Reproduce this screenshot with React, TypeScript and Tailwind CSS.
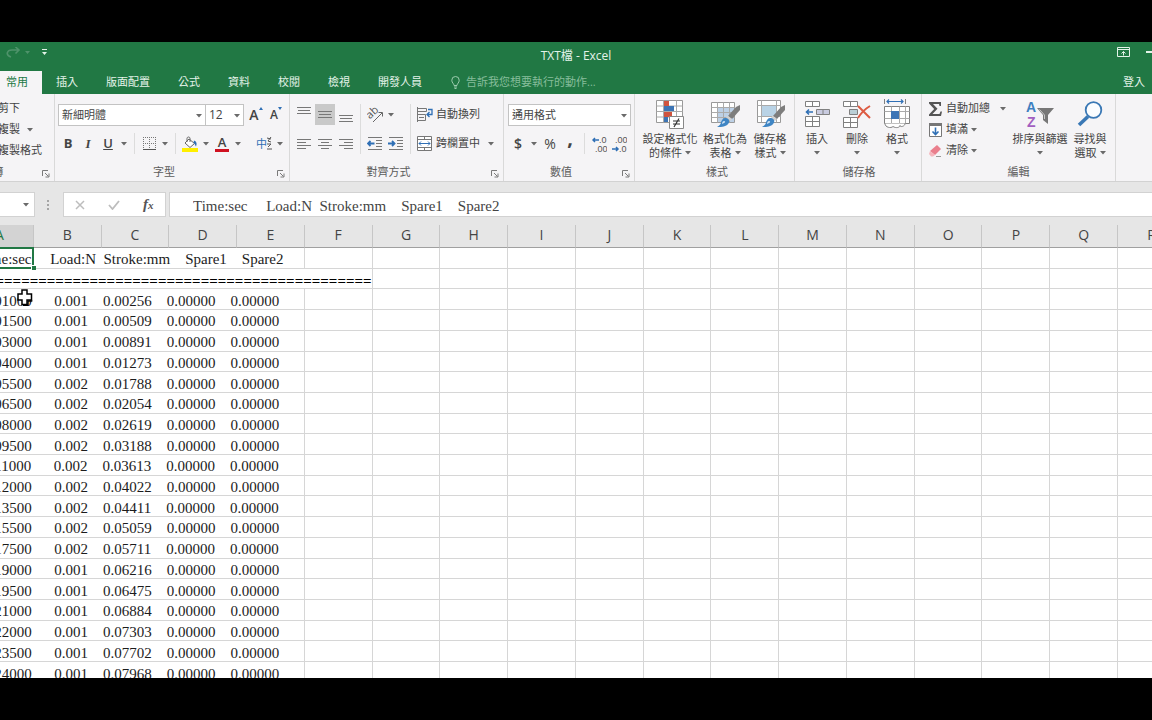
import clsx from 'clsx';
import React from 'react';

const columns = 'ABCDEFGHIJKLMNOPQR'.split('');

const tabs = ['常用', '插入', '版面配置', '公式', '資料', '校閱', '檢視', '開發人員'];

const headerText = 'Time:sec     Load:N  Stroke:mm    Spare1    Spare2';

const samples: [string, string, string][] = [
  ['0.01000', '0.001', '0.00256'],
  ['0.01500', '0.001', '0.00509'],
  ['0.03000', '0.001', '0.00891'],
  ['0.04000', '0.001', '0.01273'],
  ['0.05500', '0.002', '0.01788'],
  ['0.06500', '0.002', '0.02054'],
  ['0.08000', '0.002', '0.02619'],
  ['0.09500', '0.002', '0.03188'],
  ['0.11000', '0.002', '0.03613'],
  ['0.12000', '0.002', '0.04022'],
  ['0.13500', '0.002', '0.04411'],
  ['0.15500', '0.002', '0.05059'],
  ['0.17500', '0.002', '0.05711'],
  ['0.19000', '0.001', '0.06216'],
  ['0.19500', '0.001', '0.06475'],
  ['0.21000', '0.001', '0.06884'],
  ['0.22000', '0.001', '0.07303'],
  ['0.23500', '0.001', '0.07702'],
  ['0.24000', '0.001', '0.07968'],
];

function Caret({ className }: { className?: string }) {
  return (
    <svg
      width="6"
      height="4"
      viewBox="0 0 6 4"
      className={clsx('shrink-0 fill-[#6a6a6a]', className)}
    >
      <path d="M0 0h6L3 3.500z" />
    </svg>
  );
}

function CaretButton({ label }: { label: string }) {
  return (
    <button aria-label={label} className="flex h-[21px] w-3 items-center justify-center">
      <Caret />
    </button>
  );
}

interface ToolProps {
  label: string;
  active?: boolean;
  className?: string;
  children: React.ReactNode;
}

function Tool({ label, active, className, children }: ToolProps) {
  return (
    <button
      aria-label={label}
      className={clsx(
        'flex h-[21px] w-5 shrink-0 items-center justify-center',
        active && 'bg-[#c9c9c9]',
        className,
      )}
    >
      {children}
    </button>
  );
}

function Divider() {
  return <span className="mx-1 w-px self-stretch bg-[#dcdcdc]" />;
}

interface GroupProps {
  title: string;
  launcher?: boolean;
  className: string;
  children: React.ReactNode;
}

function Group({ title, launcher, className, children }: GroupProps) {
  return (
    <section
      className={clsx('flex shrink-0 flex-col border-r border-[#d9d9d9]', className)}
    >
      <div className="flex h-[70px] items-start">{children}</div>
      <div className="flex h-4 items-center pt-px text-[#5c5c5c]">
        <span className="flex-1 text-center">{title}</span>
        {launcher && (
          <button aria-label={`${title}設定`} className="w-4 pt-[2px] pl-1">
            <svg width="8" height="8" viewBox="0 0 8 8" fill="none" stroke="#7a7a7a">
              <path d="M.5 6V.5H6M3 3l3.500 3.500M7 3.500V7H3.500" />
            </svg>
          </button>
        )}
      </div>
    </section>
  );
}

interface BigButtonProps {
  icon: React.ReactNode;
  lines: string[];
  className: string;
}

function BigButton({ icon, lines, className }: BigButtonProps) {
  return (
    <button
      className={clsx('mt-1 flex shrink-0 flex-col items-center leading-[14px]', className)}
    >
      <span className="mb-[2px] flex h-8 items-center">{icon}</span>
      <span className="whitespace-nowrap">{lines[0]}</span>
      <span className="flex h-[14px] items-center gap-[3px] whitespace-nowrap">
        {lines[1]}
        <Caret />
      </span>
    </button>
  );
}

function SelectBox({
  label,
  value,
  className,
}: {
  label: string;
  value: string;
  className: string;
}) {
  return (
    <label className={clsx('relative block h-[22px]', className)}>
      <select
        aria-label={label}
        defaultValue={value}
        className="h-full w-full appearance-none border border-[#c3c3c3] bg-white pl-[3px] text-[#444]"
      >
        <option>{value}</option>
      </select>
      <Caret className="pointer-events-none absolute top-[10px] right-1" />
    </label>
  );
}

// Horizontal rules of differing lengths, used by all alignment buttons
function Lines({ rows }: { rows: [number, number, number][] }) {
  return (
    <svg width="14" height="15" viewBox="0 0 14 15" stroke="#777">
      {rows.map(([y, x1, x2]) => (
        <path key={y} d={`M${x1} ${y}.5H${x2}`} />
      ))}
    </svg>
  );
}

function IndentIcon({ right }: { right?: boolean }) {
  return (
    <svg width="16" height="13" viewBox="0 0 16 13" fill="none">
      <path d="M1 .5h14M9 3.500h6M9 6.500h6M9 9.500h6M1 12.500h14" stroke="#777" />
      <path
        d={right ? 'M0 6.500h6M4 4l2.500 2.500L4 9' : 'M1 6.500h6.500M3.500 4L1 6.500 3.500 9'}
        stroke="#2f6fb5"
        strokeWidth="1.800"
      />
    </svg>
  );
}

function DecimalIcon({ less }: { less?: boolean }) {
  return (
    <svg
      width="15"
      height="18"
      viewBox="0 0 15 18"
      className="fill-[#555] font-['Liberation_Sans',sans-serif] text-[9px]"
    >
      <text x={less ? 3 : 7} y="8">
        {less ? '.00' : '.0'}
      </text>
      <text x={less ? 7 : 3} y="17">
        {less ? '.0' : '.00'}
      </text>
      <path
        d={less ? 'M0 14h6M4 12l2 2-2 2' : 'M1 5h6M3 3L1 5l2 2'}
        fill="none"
        stroke="#2f6fb5"
        strokeWidth="1.500"
      />
    </svg>
  );
}

function Brush() {
  return (
    <>
      <path d="M30 6v5l-8 9-4-3 8-9z" fill="#7d7d7d" />
      <path d="M17.500 16.500l4.500 3.500-2 2-4-3z" fill="#d0d0d0" />
      <path d="M15 19c3 0 5 2 4 4.500-2 4-7 5-12 4.500 3-2 4-3 4-5 1-2 2-4 4-4z" fill="#3f85c4" />
      <path d="M14 22c1.500 0 1.500 1.500 0 2l-2 1c0-2 1-3 2-3z" fill="#cfe2f3" />
    </>
  );
}

function ConditionalIcon() {
  return (
    <svg width="28" height="30" viewBox="0 0 28 30" fill="none">
      <path d="M.5 1.500h26v22H.5z" fill="#fff" stroke="#999" />
      <path d="M7.500 1.500v22M20.500 1.500v22M.5 7h26M.5 12.500h26M.5 18h26" stroke="#aaa" />
      <path d="M8 2h5v5H8zM8 13h8v5H8z" fill="#d0543f" />
      <path d="M8 7h10v5H8z" fill="#3d75b5" />
      <path d="M8 18h4v5H8z" fill="#3d75b5" />
      <path d="M13.500 17.500h14v12h-14z" fill="#fff" stroke="#888" />
      <path d="M17 22h7M17 25h7M23 19.500L18 28" stroke="#333" strokeWidth="1.200" />
    </svg>
  );
}

function TableStyleIcon() {
  return (
    <svg width="30" height="30" viewBox="0 0 30 30" fill="none">
      <path d="M1.500 3.500h23v20h-23z" fill="#fff" stroke="#999" />
      <path d="M7 9h17v14H7z" fill="#bcd0e6" />
      <path d="M7.500 3.500v20M13.500 3.500v20M19.500 3.500v20M1.500 8.500h23M1.500 13.500h23M1.500 18.500h23" stroke="#aaa" />
      <Brush />
    </svg>
  );
}

function CellStyleIcon() {
  return (
    <svg width="30" height="30" viewBox="0 0 30 30" fill="none">
      <path d="M2.500 1.500h23v22h-23z" fill="#fff" stroke="#999" />
      <path d="M7 7h14v10H7z" fill="#b9d3e6" />
      <path d="M6.500 1.500v22M21.500 1.500v22M2.500 6.500h23M2.500 17.500h23" stroke="#aaa" />
      <Brush />
    </svg>
  );
}

function InsertIcon() {
  return (
    <svg width="28" height="28" viewBox="0 0 28 28" fill="none" stroke="#808080">
      <path d="M2.500 1.500h14v5h-14zM9.500 1.500v5M2.500 16.500h14v10h-14zM9.500 16.500v10M2.500 21.500h14" fill="#fff" />
      <path d="M13.500 9.500h13v5h-13zM20 9.500v5" fill="#c9cbe0" />
      <path d="M3.500 12H10M6 9.500L3.500 12 6 14.500" stroke="#2f6fb5" strokeWidth="1.600" />
    </svg>
  );
}

function DeleteIcon() {
  return (
    <svg width="28" height="28" viewBox="0 0 28 28" fill="none" stroke="#808080">
      <path d="M.5 1.500h14v5H.5zM7.500 1.500v5M.5 17.500h14v10H.5zM7.500 17.500v10M.5 22.500h14" fill="#fff" />
      <path d="M6.500 9.500h8v5h-8z" fill="#b9cfd6" />
      <path d="M15 6l12 12M27 6C22 9 18 13 15 18" stroke="#dd5b42" strokeWidth="2" />
    </svg>
  );
}

function FormatIcon() {
  return (
    <svg width="28" height="30" viewBox="0 0 28 30" fill="none" stroke="#808080">
      <path d="M1.500 7.500h25v17h-25z" fill="#fff" />
      <path d="M8.500 7.500v17M16.500 7.500v17M22.500 7.500v17M1.500 12.500h25M1.500 19.500h25" stroke="#aaa" />
      <path d="M8 12h8v8H8z" fill="#3d75b5" stroke="none" />
      <path d="M2 24.500c0 4 6 5 8 3 3 2 7 1 7-1 0 2 5 1 5-2" fill="#fff" />
      <path d="M1.500 0v5M22.500 0v5" />
      <path d="M4 2.500h16M6 .5L4 2.500l2 2M18 .5l2 2-2 2" stroke="#2f6fb5" strokeWidth="1.200" />
    </svg>
  );
}

function SortIcon() {
  return (
    <svg
      width="28"
      height="30"
      viewBox="0 0 28 30"
      className="font-['Liberation_Sans',sans-serif] text-[14px] font-bold"
    >
      <text x="0" y="13" fill="#3d7fc1">
        A
      </text>
      <text x="1" y="28" fill="#a25fc0">
        Z
      </text>
      <path d="M11 9h17l-6 7v9l-5-4v-5z" fill="#777" />
      <path d="M13.500 10.500l5 5.500v4" stroke="#c8c8c8" fill="none" />
    </svg>
  );
}

function FindIcon() {
  return (
    <svg width="26" height="26" viewBox="0 0 26 26" fill="none" stroke="#3a78b5">
      <circle cx="16.500" cy="9" r="7.800" fill="#fbfdff" strokeWidth="1.800" />
      <path d="M11 15.500L2 24" strokeWidth="3.600" />
    </svg>
  );
}

function Ribbon() {
  return (
    <div className="flex h-[88px] shrink-0 overflow-hidden border-b border-[#d2d2d2] bg-[#f5f4f6] text-[11px] text-[#444]">
      <Group title="剪貼簿" launcher className="-ml-16 w-[119px]">
        <div className="flex flex-col items-start pt-1 pl-[62px] whitespace-nowrap">
          <button className="h-[21px]">剪下</button>
          <div className="flex gap-1">
            <button className="h-[21px]">複製</button>
            <CaretButton label="複製選項" />
          </div>
          <button className="h-[21px]">複製格式</button>
        </div>
      </Group>

      <Group title="字型" launcher className="w-[235px]">
        <div className="flex flex-col gap-[7px] pt-[10px] pl-[3px]">
          <div className="flex">
            <SelectBox label="字型" value="新細明體" className="w-[148px]" />
            <SelectBox label="字型大小" value="12" className="-ml-px w-[39px] text-xs" />
            <Tool label="放大字型" className="ml-[2px] font-['Open_Sans',sans-serif] text-sm font-semibold">
              A
              <svg width="4" height="3" viewBox="0 0 4 3" className="mb-3 fill-[#2f6fb5]">
                <path d="M0 3h4L2 0z" />
              </svg>
            </Tool>
            <Tool label="縮小字型" className="font-['Open_Sans',sans-serif] text-xs font-semibold">
              A
              <svg width="4" height="3" viewBox="0 0 4 3" className="mb-3 fill-[#2f6fb5]">
                <path d="M0 0h4L2 3z" />
              </svg>
            </Tool>
          </div>
          <div className="flex h-[21px] items-center font-['Open_Sans',sans-serif] text-[13px]">
            <Tool label="粗體" className="font-bold">B</Tool>
            <Tool label="斜體" className="font-['Liberation_Serif',serif] font-bold italic">I</Tool>
            <Tool label="底線" className="font-semibold underline">U</Tool>
            <CaretButton label="底線選項" />
            <Divider />
            <Tool label="框線">
              <svg width="13" height="13" viewBox="0 0 13 13" stroke="#777">
                <path d="M0 .5h13M0 6.500h13M.5 0v12M6.500 0v12M12.500 0v12" strokeDasharray="1 1" />
                <path d="M0 12.500h13" stroke="#555" />
              </svg>
            </Tool>
            <CaretButton label="框線選項" />
            <Divider />
            <Tool label="填滿色彩">
              <svg width="16" height="16" viewBox="0 0 16 16" fill="none" stroke="#666">
                <path d="M7 3l5.500 4.500L8 11.500 3 7z" fill="#fff" />
                <path d="M5 6V2.500C5 .5 8 .5 8 2.500V6" />
                <path d="M12 4.500c3 1 3 3.500 2 6-1-1-1-3-2.500-3.500z" fill="#2f6fb5" stroke="none" />
                <path d="M0 12h16v4H0z" fill="#ffef00" stroke="none" />
              </svg>
            </Tool>
            <CaretButton label="填滿色彩選項" />
            <Tool label="字型色彩">
              <span className="border-b-[3px] border-[#d01020] px-[3px] leading-[13px] font-semibold">
                A
              </span>
            </Tool>
            <CaretButton label="字型色彩選項" />
            <Tool label="注音標示" className="ml-[10px] font-['Noto_Sans_CJK_TC',sans-serif] text-[11px] text-[#2f6fb5]">
              中
              <svg width="5" height="13" viewBox="0 0 5 13" fill="none" stroke="#555">
                <path d="M0 1l4 1M4 0L1 4l3 1M0 7h4L1 10M0 12h5" />
              </svg>
            </Tool>
            <CaretButton label="注音標示選項" />
          </div>
        </div>
      </Group>

      <Group title="對齊方式" launcher className="w-[214px]">
        <div className="flex pt-[10px] pl-1">
          <div className="grid grid-cols-3 gap-x-px gap-y-2">
            <Tool label="靠上對齊"><Lines rows={[[0, 0, 14], [3, 1, 13], [6, 0, 14]]} /></Tool>
            <Tool label="置中對齊" active><Lines rows={[[4, 0, 14], [7, 1, 13], [10, 0, 14]]} /></Tool>
            <Tool label="靠下對齊"><Lines rows={[[8, 0, 14], [11, 1, 13], [14, 0, 14]]} /></Tool>
            <Tool label="靠左對齊"><Lines rows={[[3, 0, 14], [6, 0, 9], [9, 0, 14], [12, 0, 9]]} /></Tool>
            <Tool label="置中"><Lines rows={[[3, 0, 14], [6, 3, 11], [9, 0, 14], [12, 3, 11]]} /></Tool>
            <Tool label="靠右對齊"><Lines rows={[[3, 0, 14], [6, 5, 14], [9, 0, 14], [12, 5, 14]]} /></Tool>
          </div>
          <Divider />
          <div className="flex flex-col gap-2">
            <div className="flex">
              <Tool label="方向">
                <svg width="17" height="16" viewBox="0 0 17 16" fill="none" stroke="#666">
                  <text
                    x="1"
                    y="10"
                    fill="#555"
                    stroke="none"
                    transform="rotate(-42 5 9)"
                    className="font-['Open_Sans',sans-serif] text-[11px]"
                  >
                    ab
                  </text>
                  <path d="M6 15l9-9M11.500 5.500H15.500V9.500" />
                </svg>
              </Tool>
              <CaretButton label="方向選項" />
            </div>
            <div className="flex gap-px">
              <Tool label="減少縮排"><IndentIcon /></Tool>
              <Tool label="增加縮排"><IndentIcon right /></Tool>
            </div>
          </div>
          <Divider />
          <div className="flex flex-col gap-2 pl-[2px] whitespace-nowrap">
            <button className="flex h-[21px] items-center gap-[3px]">
              <svg width="16" height="15" viewBox="0 0 16 15" fill="none" stroke="#777">
                <path d="M.5 0v15M.5 1.500h9v3h-9M.5 7.500h8v6h-8M2 10.500h5" />
                <path d="M11 2.500h4v5h-5M12.500 5L10 7.500l2.500 2.500" stroke="#2f6fb5" strokeWidth="1.300" />
              </svg>
              自動換列
            </button>
            <div className="flex gap-[5px]">
              <button className="flex h-[21px] items-center gap-[3px]">
                <svg width="16" height="15" viewBox="0 0 16 15" fill="none" stroke="#777">
                  <path d="M.5.5h14v14H.5zM.5 3.500h14M.5 11.500h14M7.500 0v3.500M7.500 11.500V15" fill="#fff" />
                  <path d="M2 7.500h11M4 5.500l-2 2 2 2M11 5.500l2 2-2 2" stroke="#2f6fb5" />
                </svg>
                跨欄置中
              </button>
              <CaretButton label="跨欄置中選項" />
            </div>
          </div>
        </div>
      </Group>

      <Group title="數值" launcher className="w-[131px]">
        <div className="flex flex-col gap-[7px] pt-[10px] pl-1">
          <SelectBox label="數值格式" value="通用格式" className="w-[123px]" />
          <div className="flex h-[21px] items-center font-['Open_Sans',sans-serif] text-sm">
            <Tool label="會計數字格式" className="font-semibold">$</Tool>
            <CaretButton label="會計數字格式選項" />
            <Tool label="百分比樣式">%</Tool>
            <Tool label="千分位樣式" className="pb-3 text-xl font-bold">,</Tool>
            <Divider />
            <Tool label="增加小數位數"><DecimalIcon /></Tool>
            <Tool label="減少小數位數"><DecimalIcon less /></Tool>
          </div>
        </div>
      </Group>

      <Group title="樣式" className="w-40 pl-[5px]">
        <BigButton icon={<ConditionalIcon />} lines={['設定格式化', '的條件']} className="w-[60px]" />
        <BigButton icon={<TableStyleIcon />} lines={['格式化為', '表格']} className="w-[50px]" />
        <BigButton icon={<CellStyleIcon />} lines={['儲存格', '樣式']} className="w-10" />
      </Group>

      <Group title="儲存格" className="w-[127px] pl-[2px]">
        <BigButton icon={<InsertIcon />} lines={['插入']} className="w-10" />
        <BigButton icon={<DeleteIcon />} lines={['刪除']} className="w-10" />
        <BigButton icon={<FormatIcon />} lines={['格式']} className="w-10" />
      </Group>

      <Group title="編輯" className="w-[194px]">
        <div className="flex w-[88px] flex-col pt-1 pl-[6px] whitespace-nowrap">
          <div className="flex gap-[7px]">
            <button className="flex h-[21px] items-center gap-[3px]">
              <svg width="15" height="14" viewBox="0 0 15 14" fill="#555">
                <path d="M1 0h12v4h-1.500L11 2H5l4.500 4.700L4.500 12H11.500L12.500 9.500H14L13 14H1v-1.500l5.200-5.500L1 1.500z" />
              </svg>
              自動加總
            </button>
            <CaretButton label="自動加總選項" />
          </div>
          <button className="flex h-[21px] items-center gap-[3px]">
            <svg width="15" height="14" viewBox="0 0 15 14" fill="none">
              <path d="M1.500.5h12v13h-12z" fill="#fff" stroke="#777" />
              <path d="M1 0h13v3H1z" fill="#777" />
              <path d="M7.500 4.500v7M4.500 8.500l3 3 3-3" stroke="#2f6fb5" strokeWidth="1.600" />
            </svg>
            填滿
            <Caret />
          </button>
          <button className="flex h-[21px] items-center gap-[3px]">
            <svg width="15" height="14" viewBox="0 0 15 14">
              <path d="M9 1l4 4-6 6-5-4z" fill="#ea7f8d" />
              <path d="M2 7l5 4-2 1.500H3L1 10z" fill="#f5b5bd" />
              <path d="M8 12.500h5" stroke="#999" />
            </svg>
            清除
            <Caret />
          </button>
        </div>
        <BigButton icon={<SortIcon />} lines={['排序與篩選']} className="w-[60px]" />
        <BigButton icon={<FindIcon />} lines={['尋找與', '選取']} className="w-10" />
      </Group>
    </div>
  );
}

function TitleBar() {
  return (
    <header className="shrink-0 bg-[#217844] text-[11px] text-[#e4f3e9]">
      <div className="grid h-7 grid-cols-[1fr_auto_1fr] items-center">
        <div className="flex items-center gap-3 pb-2 pl-[6px]">
          <div className="flex items-center gap-1">
            <button aria-label="取消復原">
              <svg width="15" height="11" viewBox="0 0 15 11" fill="none" stroke="#4f936b" strokeWidth="1.600">
                <path d="M5 10C-1 8 1 3 6 3h7M9.500 0L13 3 9.500 6.500" />
              </svg>
            </button>
            <svg width="5" height="3" viewBox="0 0 5 3" fill="#4f936b">
              <path d="M0 0h5L2.500 3z" />
            </svg>
          </div>
          <button aria-label="自訂快速存取工具列">
            <svg width="5" height="6" viewBox="0 0 5 6" fill="#e4f3e9">
              <path d="M0 0h5v1H0zM0 3h5L2.500 6z" />
            </svg>
          </button>
        </div>
        <h1 className="font-['Open_Sans','Noto_Sans_CJK_TC',sans-serif] text-xs">TXT檔 - Excel</h1>
        <div className="-mr-1 flex items-center justify-end gap-4 pb-2">
          <button aria-label="功能區顯示選項">
            <svg width="13" height="10" viewBox="0 0 13 10" fill="none" stroke="#e4f3e9">
              <path d="M.5.5h12v9H.5zM.5 2.500h12M6.500 8.500v-4M4.500 6.500l2-2 2 2" />
            </svg>
          </button>
          <button aria-label="最小化">
            <svg width="10" height="2" viewBox="0 0 10 2" fill="#e4f3e9">
              <path d="M0 0h10v2H0z" />
            </svg>
          </button>
        </div>
      </div>
      <div className="flex h-6 items-center">
        <nav className="-ml-2 flex h-full items-end">
          {tabs.map((tab, i) => (
            <button
              key={tab}
              className={clsx(
                'h-[23px] px-[14px] pb-px whitespace-nowrap',
                i === 0 && 'bg-[#f5f4f6] text-[#217844]',
              )}
            >
              {tab}
            </button>
          ))}
        </nav>
        <label className="ml-[15px] flex items-center gap-[6px]">
          <svg width="9" height="13" viewBox="0 0 9 13" fill="none" stroke="#9ccbae">
            <path d="M3 9.500C3 7.500.8 7 .8 4.200a3.700 3.700 0 0 1 7.400 0C8.200 7 6 7.500 6 9.500zM3 11h3M3.500 12.500h2" />
          </svg>
          <input
            aria-label="告訴我您想要執行的動作"
            placeholder="告訴我您想要執行的動作..."
            className="w-40 bg-transparent outline-none placeholder:text-[#86bd9b]"
          />
        </label>
        <button className="mr-[7px] ml-auto">登入</button>
      </div>
    </header>
  );
}

function FormulaBar() {
  return (
    <div className="flex h-[43px] shrink-0 items-start bg-[#e6e6e6] pt-[10px]">
      <button
        aria-label="名稱方塊"
        className="flex h-[25px] w-[35px] items-center justify-end border border-l-0 border-[#d2d2d2] bg-white pr-[5px]"
      >
        <Caret />
      </button>
      <svg width="2" height="25" viewBox="0 0 2 25" className="mr-[14px] ml-3" stroke="#a5a5a5" strokeWidth="2">
        <path d="M1 8v10" strokeDasharray="2 2" />
      </svg>
      <div className="flex h-[25px] w-[103px] items-center justify-around border border-[#d2d2d2] bg-white">
        <button aria-label="取消">
          <svg width="10" height="10" viewBox="0 0 10 10" stroke="#bdbdbd" strokeWidth="1.500">
            <path d="M1 1l8 8M9 1L1 9" />
          </svg>
        </button>
        <button aria-label="輸入">
          <svg width="12" height="10" viewBox="0 0 12 10" fill="none" stroke="#bdbdbd" strokeWidth="1.800">
            <path d="M1 5l3.500 4L11 1" />
          </svg>
        </button>
        <button
          aria-label="插入函數"
          className="font-['Liberation_Serif',serif] text-[15px] leading-5 font-bold text-[#555] italic"
        >
          f<span className="text-[11px]">x</span>
        </button>
      </div>
      <input
        aria-label="資料編輯列"
        defaultValue={headerText}
        className="ml-[3px] h-[25px] min-w-0 flex-1 border border-r-0 border-[#d2d2d2] bg-white pt-1 pl-[23px] font-['Liberation_Serif',serif] text-[15px] text-[#444] outline-none"
      />
    </div>
  );
}

function EmptyCells({ from }: { from: number }) {
  return columns
    .slice(from)
    .map((col) => <td key={col} className="border-r border-b border-[#d6d6d6]" />);
}

function Sheet() {
  return (
    <main className="relative min-h-0 flex-1 overflow-hidden bg-white">
      <table className="-ml-[34px] h-[458px] w-[calc(100%+68px)] table-fixed border-separate border-spacing-0 font-['Liberation_Serif',serif] text-[15px] leading-4 text-[#1c1c1c]">
        <thead>
          <tr className="h-[23px] font-['Open_Sans',sans-serif] text-sm text-[#444]">
            {columns.map((col, i) => (
              <th
                key={col}
                className={clsx(
                  'h-[23px] border-r border-b border-[#c6c6c6] border-b-[#a0a0a0] p-0 pb-[2px] font-normal',
                  i === 0 ? 'bg-[#d3d3d3] text-[#217844]' : 'bg-[#e6e6e6]',
                )}
              >
                {col}
              </th>
            ))}
          </tr>
        </thead>
        <tbody className="[&_td]:p-0">
          <tr>
            <td colSpan={5} className="relative border-r border-b border-[#d6d6d6]">
              <p className="overflow-hidden pt-[3px] pl-[11px] whitespace-pre">{headerText}</p>
              {/* selection frame of A1 */}
              <span className="absolute -top-px left-0 h-[calc(100%+2px)] w-1/5 border-2 border-[#217844]" />
              <span className="absolute -bottom-[2px] left-1/5 -ml-[3px] size-[5px] border-t border-l border-white bg-[#217844]" />
            </td>
            <EmptyCells from={5} />
          </tr>
          <tr>
            <td colSpan={6} className="border-r border-b border-[#d6d6d6]">
              <p className="flex justify-end overflow-hidden pt-[5px] leading-[14px] font-bold text-black">
                {'='.repeat(47)}
              </p>
            </td>
            <EmptyCells from={6} />
          </tr>
          {samples.map(([time, load, stroke]) => (
            <tr key={time}>
              <td colSpan={5} className="border-r border-b border-[#d6d6d6]">
                <p className="pt-[3px] pl-[17px] whitespace-pre">
                  {`${time}      ${load}    ${stroke}    0.00000    0.00000`}
                </p>
              </td>
              <EmptyCells from={5} />
            </tr>
          ))}
        </tbody>
      </table>
      <svg
        width="16"
        height="17"
        viewBox="0 0 16 17"
        className="absolute top-16 left-[17px]"
        fill="#fff"
        stroke="#000"
        strokeWidth="1.500"
      >
        <path d="M5 1h5v4h4.500v6H10v4.500H5V11H1V5h4z" />
        <path d="M6 16.300h5V12h4.300" fill="none" />
      </svg>
    </main>
  );
}

export default function App() {
  return (
    <div className="flex h-screen flex-col overflow-hidden bg-black py-[42px] font-['Open_Sans','Noto_Sans_CJK_TC',sans-serif]">
      <TitleBar />
      <Ribbon />
      <FormulaBar />
      <Sheet />
    </div>
  );
}
